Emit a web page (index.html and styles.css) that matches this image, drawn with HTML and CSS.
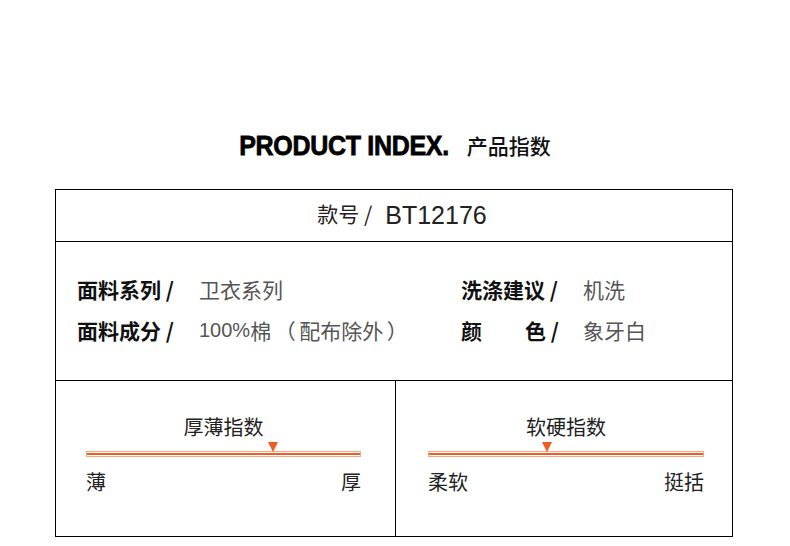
FILE: index.html
```html
<!DOCTYPE html>
<html lang="zh-CN">
<head>
<meta charset="utf-8">
<title>Product Index</title>
<link rel="stylesheet" href="styles.css">
</head>
<body>
<div class="page">
  <h1 class="title"><span class="title-en">PRODUCT INDEX.</span><span class="title-cn">产品指数</span></h1>
  <div class="sheet">
    <div class="row-code"><span class="code-line"><span class="cn">款号 /</span><span class="code">BT12176</span></span></div>
    <div class="row-info">
      <div class="info">
        <span class="label">面料系列 /</span><span class="value">卫衣系列</span>
      </div>
      <div class="info">
        <span class="label">洗涤建议 /</span><span class="value">机洗</span>
      </div>
      <div class="info">
        <span class="label">面料成分 /</span><span class="value"><span class="num">100%</span>棉<span class="paren">（</span>配布除外<span class="paren">）</span></span>
      </div>
      <div class="info">
        <span class="label"><span class="spread"><span>颜</span><span>色</span></span> /</span><span class="value">象牙白</span>
      </div>
    </div>
    <div class="row-index">
      <div class="panel panel-left">
        <div class="panel-title">厚薄指数</div>
        <div class="scale">
          <div class="bar"></div>
          <span class="marker" style="left: 68%"></span>
        </div>
        <div class="ends"><span>薄</span><span>厚</span></div>
      </div>
      <div class="panel panel-right">
        <div class="panel-title">软硬指数</div>
        <div class="scale">
          <div class="bar"></div>
          <span class="marker" style="left: 43%"></span>
        </div>
        <div class="ends"><span>柔软</span><span>挺括</span></div>
      </div>
    </div>
  </div>
</div>
</body>
</html>
```

FILE: styles.css
```css
* { box-sizing: border-box; }
html, body { margin: 0; padding: 0; background: #fff; }
body {
  font-family: "Liberation Sans", "Noto Sans CJK SC", sans-serif;
  color: #111;
}
.page {
  width: 790px;
  padding-top: 130px;
}
.title {
  margin: 0 0 29px;
  height: 30px;
  display: flex;
  justify-content: center;
  align-items: center;
  gap: 18px;
  font-weight: 400;
}
.title-en {
  display: inline-block;
  font-family: "Liberation Sans", sans-serif;
  font-weight: 700;
  font-size: 25px;
  letter-spacing: -0.3px;
  -webkit-text-stroke: 0.7px #000;
  color: #000;
  line-height: 30px;
  transform: scaleY(1.1);
}
.title-cn {
  font-family: "Noto Sans CJK SC", sans-serif;
  font-size: 21px;
  font-weight: 500;
  color: #111;
  line-height: 30px;
}
.sheet {
  margin-left: 55px;
  width: 678px;
  border: 1px solid #000;
}
.row-code {
  height: 52px;
  border-bottom: 1px solid #000;
  display: flex;
  justify-content: center;
  align-items: center;
  padding-left: 16px;
}
.code-line {
  line-height: 30px;
  color: #222;
}
.row-code .cn {
  font-family: "Noto Sans CJK SC", sans-serif;
  font-size: 21px;
  vertical-align: 2px;
}
.row-code .code {
  font-size: 25px;
  margin-left: 13px;
}
.row-info {
  height: 139px;
  border-bottom: 1px solid #000;
  padding: 32px 0 0 21px;
  display: grid;
  grid-template-columns: 384px 1fr;
  grid-auto-rows: 30px;
  row-gap: 11px;
}
.info {
  display: flex;
  align-items: center;
  font-family: "Noto Sans CJK SC", sans-serif;
  font-size: 21px;
}
.label {
  width: 122px;
  font-weight: 700;
  color: #111;
  display: flex;
  align-items: center;
  white-space: pre;
}
.spread {
  width: 85px;
  display: flex;
  justify-content: space-between;
}
.value {
  color: #555;
  font-weight: 400;
  display: flex;
  align-items: center;
}
.num {
  font-family: "Liberation Sans", sans-serif;
  font-size: 20px;
}
.paren {
  display: inline-block;
  width: 28px;
  text-align: center;
}
.row-index {
  display: flex;
  height: 155px;
}
.panel {
  padding-top: 31px;
  display: flex;
  flex-direction: column;
  font-family: "Noto Sans CJK SC", sans-serif;
  font-size: 20px;
  color: #222;
}
.panel-left {
  width: 340px;
  border-right: 1px solid #000;
  padding-left: 30px;
  padding-right: 34px;
}
.panel-right {
  flex: 1;
  padding-left: 32px;
  padding-right: 28px;
}
.panel-title {
  height: 30px;
  line-height: 30px;
  text-align: center;
}
.scale {
  position: relative;
  padding-top: 9px;
}
.bar {
  height: 6px;
  border: 1px solid #f7a984;
  background: linear-gradient(#fff 0 1px, #f15a22 1px 3px, #fff 3px);
}
.marker {
  position: absolute;
  top: 0;
  width: 0;
  height: 0;
  margin-left: -5px;
  border-left: 5px solid transparent;
  border-right: 5px solid transparent;
  border-top: 10px solid #f15a22;
}
.ends {
  margin-top: 10px;
  height: 30px;
  line-height: 30px;
  display: flex;
  justify-content: space-between;
}
```
